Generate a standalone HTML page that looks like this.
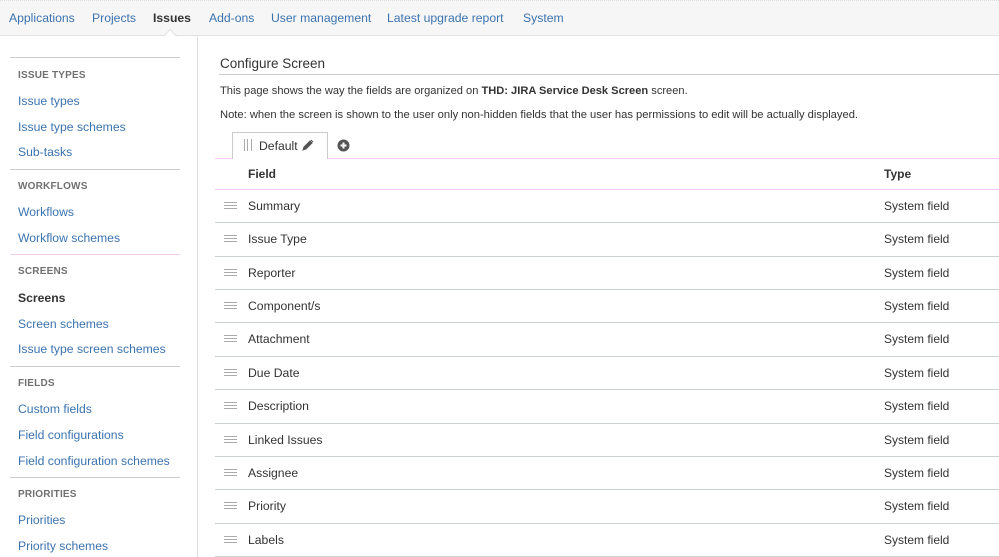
<!DOCTYPE html>
<html><head><meta charset="utf-8"><style>
*{margin:0;padding:0;box-sizing:border-box}
body{width:999px;height:557px;overflow:hidden;background:#fff;font-family:"Liberation Sans",Arial,sans-serif;position:relative;color:#333}
.t{position:absolute;white-space:nowrap;line-height:1}
#hdr{position:absolute;left:0;top:0;width:999px;height:36px;background:#f6f6f6;border-top:1px dotted #ddd;border-bottom:1px solid #e2e2e2}
.nav{font-size:12.2px;color:#3b73af;top:12px}
.sh{font-size:10px;font-weight:bold;color:#707070;letter-spacing:.2px}
.si{font-size:12.2px;color:#3b73af}
.hl{position:absolute;left:10px;width:170px;height:1px;background:#ccc}
.rb{position:absolute;left:215px;width:784px;height:1px;background:#cdd3cd}
.fn{font-size:12.2px;color:#333}
.ty{font-size:12px;color:#333}
.dr{position:absolute;left:224px;width:13px;height:7px;border-top:1px solid #aaa;border-bottom:1px solid #aaa}
.dr:after{content:"";position:absolute;left:0;top:2px;width:13px;height:1px;background:#aaa}
</style></head><body>
<div id="hdr"></div>
<div class="t nav" style="left:9px">Applications</div>
<div class="t nav" style="left:92px">Projects</div>
<div class="t nav" style="left:153px;color:#333;font-weight:bold">Issues</div>
<div class="t nav" style="left:209px">Add-ons</div>
<div class="t nav" style="left:271px">User management</div>
<div class="t nav" style="left:387px">Latest upgrade report</div>
<div class="t nav" style="left:523px">System</div>
<div style="position:absolute;left:165px;top:31px;width:10px;height:10px;background:#fff;border-left:1px solid #e2e2e2;border-top:1px solid #e2e2e2;transform:rotate(45deg)"></div>
<div style="position:absolute;left:197px;top:37px;width:1px;height:520px;background:#ddd"></div>

<div class="hl" style="top:57px"></div>
<div class="t sh" style="left:18px;top:71px">ISSUE TYPES</div>
<div class="t si" style="left:18px;top:95px">Issue types</div>
<div class="t si" style="left:18px;top:121px">Issue type schemes</div>
<div class="t si" style="left:18px;top:146px">Sub-tasks</div>
<div class="hl" style="top:169px"></div>
<div class="t sh" style="left:18px;top:182px">WORKFLOWS</div>
<div class="t si" style="left:18px;top:206px">Workflows</div>
<div class="t si" style="left:18px;top:232px">Workflow schemes</div>
<div class="hl" style="top:254px;background:#f3d0f3"></div>
<div class="t sh" style="left:18px;top:267px">SCREENS</div>
<div class="t si" style="left:18px;top:292px;color:#333;font-weight:bold">Screens</div>
<div class="t si" style="left:18px;top:318px">Screen schemes</div>
<div class="t si" style="left:18px;top:343px">Issue type screen schemes</div>
<div class="hl" style="top:366px"></div>
<div class="t sh" style="left:18px;top:379px">FIELDS</div>
<div class="t si" style="left:18px;top:403px">Custom fields</div>
<div class="t si" style="left:18px;top:429px">Field configurations</div>
<div class="t si" style="left:18px;top:455px">Field configuration schemes</div>
<div class="hl" style="top:477px"></div>
<div class="t sh" style="left:18px;top:490px">PRIORITIES</div>
<div class="t si" style="left:18px;top:514px">Priorities</div>
<div class="t si" style="left:18px;top:540px">Priority schemes</div>

<div class="t" style="left:220px;top:57px;font-size:13.5px;color:#333">Configure Screen</div>
<div style="position:absolute;left:219px;top:74px;width:780px;height:1px;background:#ccc"></div>
<div class="t" style="left:220px;top:86px;font-size:11.1px">This page shows the way the fields are organized on <b>THD: JIRA Service Desk Screen</b> screen.</div>
<div class="t" style="left:220px;top:110px;font-size:11.2px">Note: when the screen is shown to the user only non-hidden fields that the user has permissions to edit will be actually displayed.</div>

<div style="position:absolute;left:232px;top:132px;width:96px;height:27px;border:1px solid #ccc;border-bottom:none;background:#fff;z-index:2"></div>
<div style="position:absolute;left:244px;top:139px;width:8px;height:12px;border-left:1px solid #aaa;border-right:1px solid #aaa;z-index:3"></div>
<div style="position:absolute;left:247px;top:139px;width:1px;height:12px;background:#aaa;z-index:3"></div>
<div class="t" style="left:259px;top:140px;font-size:12.2px;z-index:3">Default</div>
<svg style="position:absolute;left:302px;top:139px;z-index:3" width="12" height="12" viewBox="0 0 12 12"><path d="M1 11l1-3 6-6 2 2-6 6z M9 1l2 2" fill="#555" stroke="#555" stroke-width="1"/></svg>
<svg style="position:absolute;left:337px;top:139px" width="13" height="13" viewBox="0 0 13 13"><circle cx="6.5" cy="6.5" r="6" fill="#555"/><path d="M6.5 3.5v6M3.5 6.5h6" stroke="#fff" stroke-width="2"/></svg>
<div style="position:absolute;left:215px;top:158px;width:784px;height:1px;background:#f3c8f3"></div>
<div class="t" style="left:248px;top:168px;font-size:12px;font-weight:bold">Field</div>
<div class="t" style="left:884px;top:168px;font-size:12px;font-weight:bold">Type</div>
<div style="position:absolute;left:215px;top:189px;width:784px;height:1px;background:#f3c8f3"></div>

<div class="dr" style="top:202px"></div><div class="t fn" style="left:248px;top:200px">Summary</div><div class="t ty" style="left:884px;top:200px">System field</div><div class="rb" style="top:222px"></div>
<div class="dr" style="top:235px"></div><div class="t fn" style="left:248px;top:233px">Issue Type</div><div class="t ty" style="left:884px;top:233px">System field</div><div class="rb" style="top:256px"></div>
<div class="dr" style="top:269px"></div><div class="t fn" style="left:248px;top:267px">Reporter</div><div class="t ty" style="left:884px;top:267px">System field</div><div class="rb" style="top:289px"></div>
<div class="dr" style="top:302px"></div><div class="t fn" style="left:248px;top:300px">Component/s</div><div class="t ty" style="left:884px;top:300px">System field</div><div class="rb" style="top:322px"></div>
<div class="dr" style="top:335px"></div><div class="t fn" style="left:248px;top:333px">Attachment</div><div class="t ty" style="left:884px;top:333px">System field</div><div class="rb" style="top:356px"></div>
<div class="dr" style="top:369px"></div><div class="t fn" style="left:248px;top:367px">Due Date</div><div class="t ty" style="left:884px;top:367px">System field</div><div class="rb" style="top:389px"></div>
<div class="dr" style="top:402px"></div><div class="t fn" style="left:248px;top:400px">Description</div><div class="t ty" style="left:884px;top:400px">System field</div><div class="rb" style="top:423px"></div>
<div class="dr" style="top:436px"></div><div class="t fn" style="left:248px;top:434px">Linked Issues</div><div class="t ty" style="left:884px;top:434px">System field</div><div class="rb" style="top:456px"></div>
<div class="dr" style="top:469px"></div><div class="t fn" style="left:248px;top:467px">Assignee</div><div class="t ty" style="left:884px;top:467px">System field</div><div class="rb" style="top:489px"></div>
<div class="dr" style="top:502px"></div><div class="t fn" style="left:248px;top:500px">Priority</div><div class="t ty" style="left:884px;top:500px">System field</div><div class="rb" style="top:523px"></div>
<div class="dr" style="top:536px"></div><div class="t fn" style="left:248px;top:534px">Labels</div><div class="t ty" style="left:884px;top:534px">System field</div><div class="rb" style="top:556px"></div>
</body></html>
